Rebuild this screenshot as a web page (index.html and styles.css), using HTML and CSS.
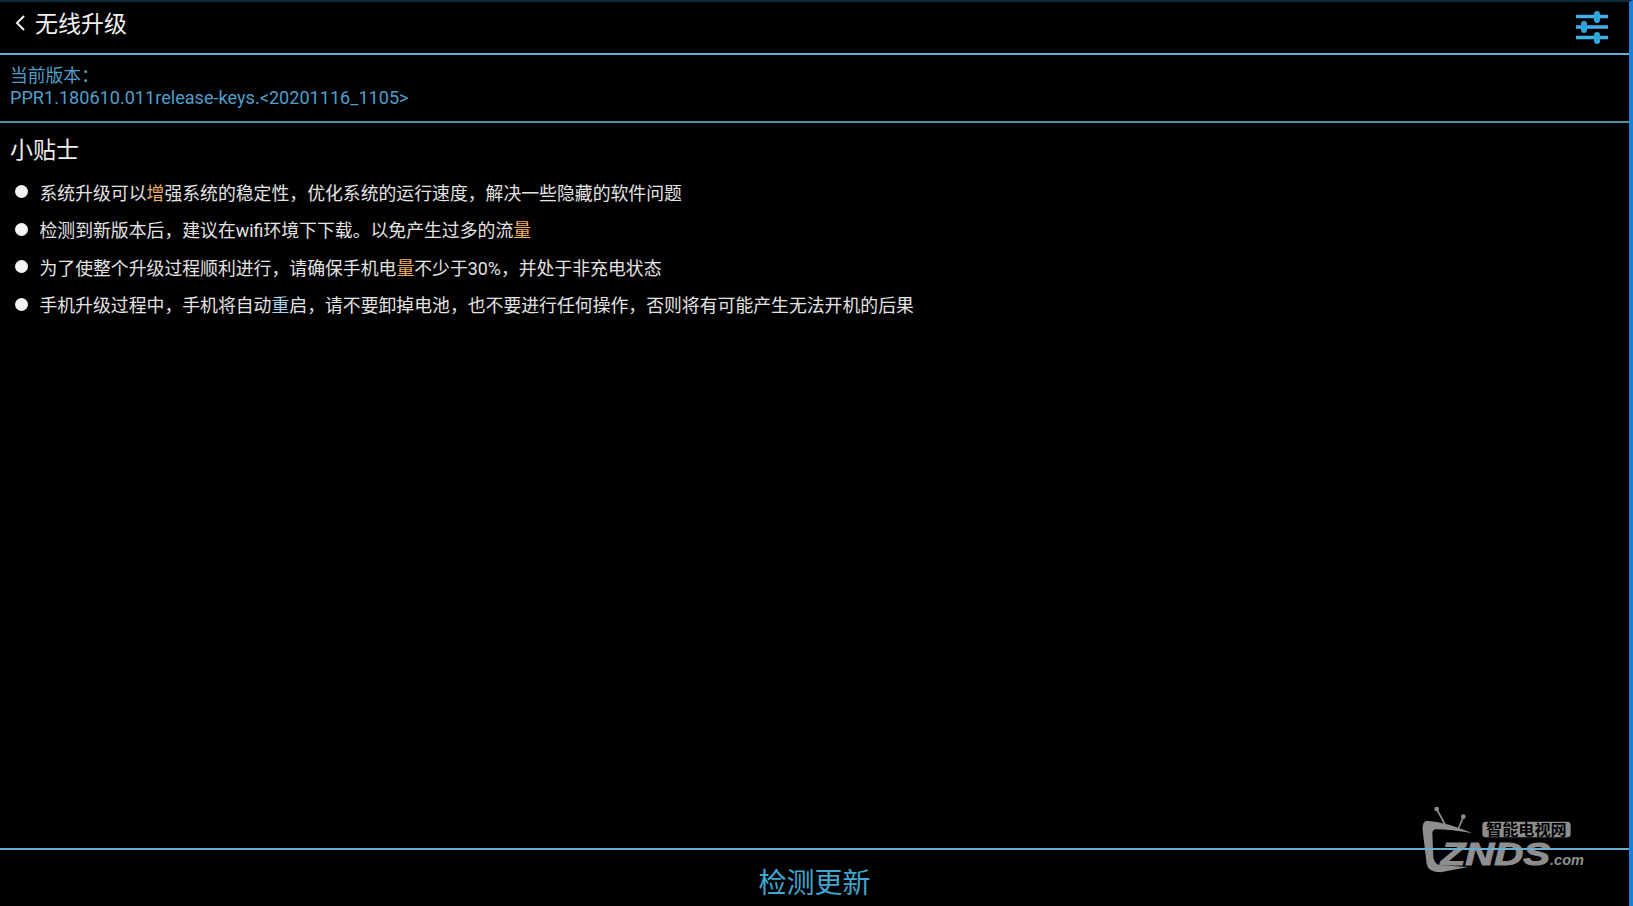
FILE: index.html
```html
<!DOCTYPE html>
<html lang="en">
<head>
    <meta charset="UTF-8">
    <meta name="viewport" content="width=device-width, initial-scale=1.0">
    <title>无线升级</title>
    <link rel="stylesheet" href="styles.css">
</head>
<body>
    <div class="screen">
        <div class="topbar">
            <div class="title">
                <svg class="back" viewBox="0 0 12 18"><path d="M10 2 L3 9 L10 16"/></svg>
                <span>无线升级</span>
            </div>
            <svg class="settings" viewBox="0 0 36 36">
                <path class="bar" d="M2 6.500 H34 M2 17 H34 M2 27.500 H34"/>
                <rect class="knob" x="20" y="1" width="6" height="12" rx="3"/>
                <rect class="knob" x="7" y="11" width="6" height="12" rx="3"/>
                <rect class="knob" x="20" y="22" width="6" height="12" rx="3"/>
            </svg>
        </div>

        <div class="version">
            <div class="version-label">当前版本&#xFF1A;</div>
            <div>PPR1.180610.011release-keys.&lt;20201116_1105&gt;</div>
        </div>

        <div class="tips">
            <h3>小贴士</h3>
            <ul>
                <li><span>系统升级可以<span class="warm">增</span>强系统的稳定性&#xFF0C;优化系统的运行速度&#xFF0C;解决一些隐藏的软件问题</span></li>
                <li><span>检测到新版本后&#xFF0C;建议在wifi环境下下载。以免产生过多的流<span class="warm">量</span></span></li>
                <li><span>为了使整个升级过程顺利进行&#xFF0C;请确保手机电<span class="warm">量</span>不少于30%&#xFF0C;并处于非充电状态</span></li>
                <li><span>手机升级过程中&#xFF0C;手机将自动<span class="cool">重</span>启&#xFF0C;请不要卸掉电池&#xFF0C;也不要进行任何操作&#xFF0C;否则将有可能产生无法开机的后果</span></li>
            </ul>
        </div>

        <div class="footer">检测更新</div>

        <!-- watermark, sits over the footer line -->
        <svg class="watermark" viewBox="0 0 699 348">
            <circle cx="110" cy="57" r="7"/>
            <circle cx="190" cy="80" r="7"/>
            <path class="antenna" d="M110 57 L136 105 M190 80 L176 114"/>
            <path d="M80 92 Q140 96 218 130 Q150 118 108 118 Q98 118 97 130 L100 200 Q102 222 122 226 L205 231 L122 247 Q84 246 80 222 L68 122 Q66 94 80 92 Z"/>
            <rect x="247" y="95" width="265" height="47" rx="10"/>
            <text class="wm-cn" x="258" y="134" textLength="242" lengthAdjust="spacingAndGlyphs">智能电视网</text>
            <text class="wm-znds" x="122" y="224" textLength="328" lengthAdjust="spacingAndGlyphs">ZNDS</text>
            <text class="wm-com" x="450" y="224" textLength="102" lengthAdjust="spacingAndGlyphs">.com</text>
        </svg>
    </div>
</body>
</html>
```

FILE: styles.css
```css
html, body { margin: 0; height: 100%; background: #000; }
body { font-family: Roboto, 'Noto Sans CJK SC', sans-serif; overflow: hidden; }

.screen {
    position: relative;
    box-sizing: border-box;
    height: 906px;
    display: flex;
    flex-direction: column;
    border-top: 2px solid #0b2a3c;
    border-right: 4px solid #1780d8;
    background: #000;
}

.topbar {
    height: 51px;
    flex: none;
    display: flex;
    justify-content: space-between;
    padding: 0 19px 0 14px;
    border-bottom: 2px solid #69aed0;
}
.title {
    display: flex;
    align-items: center;
    gap: 9px;
    height: 40px;
    font-size: 23px;
    color: #f0f0f0;
}
.back { width: 12px; height: 18px; margin-top: 1px; }
.back path { fill: none; stroke: #f0f0f0; stroke-width: 2; }
.settings { width: 36px; height: 36px; margin-top: 8px; }
.settings .bar { fill: none; stroke: #3fb0ea; stroke-width: 3.500; }
.settings .knob { fill: #2ea6d8; }

.version {
    height: 68px;
    flex: none;
    box-sizing: border-box;
    padding: 10px 10px 0;
    font-size: 18.100px;
    line-height: 22px;
    color: #4f9fcb;
    border-bottom: 2px solid #4f8ea8;
}
.version-label { font-size: 17.800px; }

.tips { flex: 1; padding: 0 10px; color: #e4e4e4; }
.tips h3 {
    margin: 13px 0 0;
    font-size: 23px;
    font-weight: 400;
    line-height: 30px;
    color: #eee;
}
.tips ul { list-style: none; margin: 7px 0 0; padding: 0; }
.tips li {
    display: flex;
    align-items: center;
    gap: 11.500px;
    height: 37.500px;
    font-size: 17.850px;
}
.tips li::before {
    content: '';
    width: 13px;
    height: 13px;
    margin-left: 5px;
    border-radius: 50%;
    background: #f4f4f4;
    flex: none;
}
.warm { color: #f0b060; }
.cool { color: #a8d4f4; }

.footer {
    height: 58px;
    flex: none;
    box-sizing: border-box;
    padding-top: 6px;
    display: flex;
    align-items: center;
    justify-content: center;
    border-top: 2px solid #69aed0;
    font-size: 28px;
    color: #3fa7d0;
    position: relative;
    z-index: 2;
}

.watermark {
    position: absolute;
    right: -4px;
    bottom: 0;
    width: 233px;
    height: 116px;
    fill: #8e8e8e;
    z-index: 1;
}
.watermark .antenna { fill: none; stroke: #8e8e8e; stroke-width: 5; }
.wm-cn { font-size: 44px; font-weight: 700; fill: #000; font-family: 'Noto Sans CJK SC', sans-serif; }
.wm-znds { font-size: 96px; font-weight: 700; font-style: italic; font-family: 'Liberation Sans', sans-serif; stroke: #8e8e8e; stroke-width: 3; }
.wm-com { font-size: 46px; font-weight: 700; font-style: italic; font-family: 'Liberation Sans', sans-serif; }
```
